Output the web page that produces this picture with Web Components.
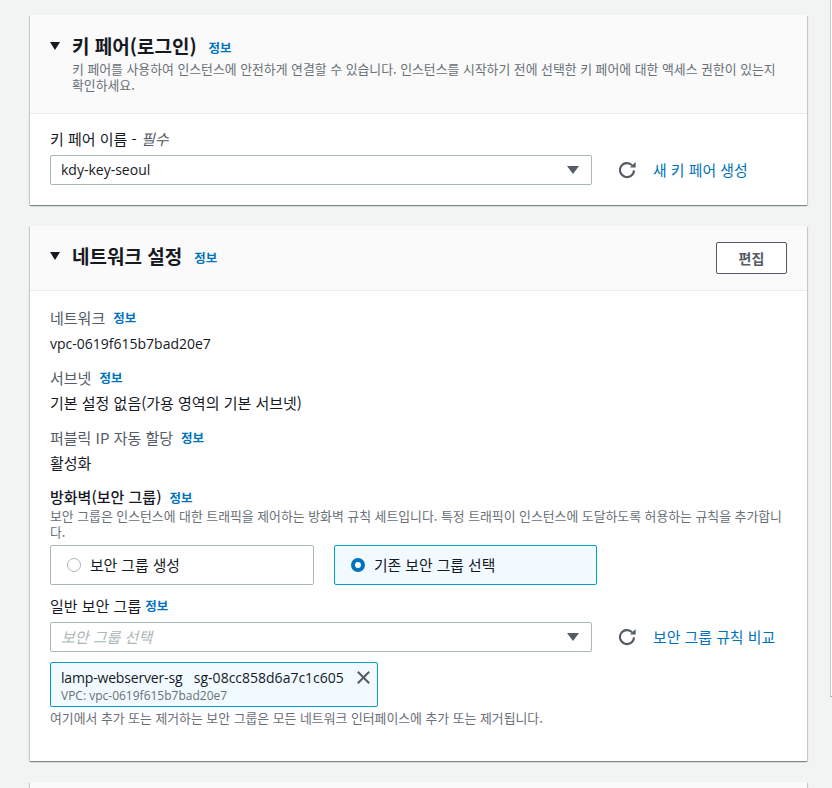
<!DOCTYPE html>
<html lang="ko"><head><meta charset="utf-8"><title>인스턴스</title>
<style>
html,body{margin:0;background:#f2f3f3;}
body{height:788px;overflow:hidden;display:flex;align-items:flex-start;font:14px/20px "Open Sans","Noto Sans CJK KR",sans-serif;color:#16191f;}
main{flex:none;width:777px;display:flex;flex-direction:column;gap:21px;padding:15px 23px 0 30px;}
</style></head><body>
<template id="t-info"><style>:host{display:inline-block;font:600 12.5px/16px "Noto Sans CJK KR",sans-serif;color:#0073bb;}</style><slot>정보</slot></template>

<template id="t-card"><style>
:host{display:block;background:#fff;box-shadow:0 1px 1px 0 rgba(0,28,36,.3),1px 1px 1px 0 rgba(0,28,36,.15),-1px 1px 1px 0 rgba(0,28,36,.15);}
header{display:flex;background:#fafafa;border-bottom:1px solid #eaeded;padding:var(--hp,18px 20px 20px);gap:12px;align-items:flex-start;}
.arrow{width:0;height:0;border-left:5.5px solid transparent;border-right:5.5px solid transparent;border-top:8px solid #16191f;margin-top:var(--am,9px);flex:none;}
.txt{flex:1;min-width:0;}
h2{margin:0;font:700 19px/26px "Noto Sans CJK KR",sans-serif;color:#16191f;display:flex;align-items:center;gap:12px;}
h2 x-info{margin-top:3px;}
.b{padding:var(--bp,16px 20px 20px);}
</style><header><span class="arrow"></span><div class="txt"><h2><slot name="title"></slot><x-info></x-info></h2><slot name="desc"></slot></div><slot name="action"></slot></header><div class="b"><slot></slot></div></template>

<template id="t-select"><style>
:host{display:flex;align-items:center;gap:27px;}
.s{width:542px;box-sizing:border-box;height:30px;display:flex;align-items:center;justify-content:space-between;background:#fff;border:1px solid #aab7b8;border-radius:2px;padding:0 12px 0 10px;font:14px/20px "Open Sans","Noto Sans CJK KR",sans-serif;color:#16191f;flex:none;}
.c{width:0;height:0;border-left:6px solid transparent;border-right:6px solid transparent;border-top:8px solid #545b64;}
svg{width:18px;height:18px;flex:none;display:block;}
.l{font:14.9px/20px "Noto Sans CJK KR",sans-serif;color:#0073bb;margin-left:-11px;white-space:nowrap;}
</style><div class="s"><span><slot></slot></span><span class="c"></span></div><svg viewBox="0 0 18 18" fill="none"><path d="M13.2 4.4A7 7 0 1 0 15 9.4" stroke="#545b64" stroke-width="2.1"/><path d="M16.6 1v5.6H11z" fill="#545b64"/></svg><span class="l"><slot name="link"></slot></span></template>

<template id="t-field"><style>
:host{display:block;}
.l{font:15px/20px "Noto Sans CJK KR",sans-serif;color:#545b64;display:flex;align-items:center;gap:8px;height:20px;padding-top:1px;}
.v{display:flow-root;font:14px/20px "Open Sans","Noto Sans CJK KR",sans-serif;color:#16191f;margin-top:6px;height:20px;}
::slotted(.ko){display:block;font:15px/20px "Noto Sans CJK KR",sans-serif;margin-top:-1px;}
</style><div class="l"><slot name="label"></slot><x-info></x-info></div><div class="v"><slot></slot></div></template>

<template id="t-radio"><style>
:host{display:flex;box-sizing:border-box;width:264px;height:40px;align-items:center;gap:9px;padding-left:16px;background:#fff;border:1px solid #aab7b8;border-radius:2px;font:14.8px/20px "Noto Sans CJK KR",sans-serif;color:#16191f;}
:host([checked]){width:263px;background:#f1faff;border-color:#00a1c9;}
i{box-sizing:border-box;width:14px;height:14px;border-radius:50%;border:1px solid #aab7b8;background:#fff;flex:none;}
:host([checked]) i{border:4px solid #0073bb;}
</style><i></i><slot></slot></template>

<template id="t-token"><style>
:host{display:block;box-sizing:border-box;width:328px;height:45px;background:#f1faff;border:1px solid #00a1c9;border-radius:2px;padding:5px 0 0 10px;position:relative;}
.a{font:14px/20px "Open Sans",sans-serif;color:#16191f;white-space:nowrap;display:flex;gap:11.5px;}
.b{font:12px/14px "Open Sans",sans-serif;color:#687078;margin-top:1px;}
svg{position:absolute;left:306px;top:8px;width:13px;height:13px;}
</style><div class="a"><slot name="a"></slot><slot name="a2"></slot></div><div class="b"><slot name="b"></slot></div><svg viewBox="0 0 13 13" fill="none" stroke="#545b64" stroke-width="2"><path d="M.8.8l11.4 11.4M12.2.8L.8 12.2"/></svg></template>

<template id="t-side"><style>
:host{display:block;flex:none;box-sizing:border-box;width:2px;height:697px;background:#fff;border-left:1px solid #c6cdcd;border-bottom:1px solid #9aa5a6;}
</style></template>

<script>
for(const [n,id] of [['x-info','t-info'],['x-card','t-card'],['x-select','t-select'],['x-field','t-field'],['x-radio','t-radio'],['x-token','t-token'],['x-side','t-side']]){
 customElements.define(n,class extends HTMLElement{constructor(){super();this.attachShadow({mode:'open'}).appendChild(document.getElementById(id).content.cloneNode(true));}});
}
customElements.define('x-button',class extends HTMLElement{constructor(){super();this.attachShadow({mode:'open'}).innerHTML='<style>:host{display:flex;align-items:center;justify-content:center;box-sizing:border-box;width:71px;height:32px;border:1px solid #545b64;border-radius:2px;background:#fff;font:700 14px/20px "Noto Sans CJK KR",sans-serif;color:#545b64;flex:none;}</style><slot></slot>';}});
customElements.define('x-key-card',class extends HTMLElement{constructor(){super();this.attachShadow({mode:'open'}).innerHTML=`<style>:host{display:block;height:190px;}
.lab{font:15px/20px "Noto Sans CJK KR",sans-serif;color:#16191f;margin-top:-1px;margin-bottom:6px}
.lab em{color:#545b64}
.desc{display:block;font:12.87px/16px "Noto Sans CJK KR",sans-serif;color:#687078;margin-top:2px;}</style>
<x-card><span slot="title">키 페어(로그인)</span><span class="desc" slot="desc">키 페어를 사용하여 인스턴스에 안전하게 연결할 수 있습니다. 인스턴스를 시작하기 전에 선택한 키 페어에 대한 액세스 권한이 있는지 확인하세요.</span>
<div class="lab">키 페어 이름 - <em>필수</em></div><x-select>kdy-key-seoul<span slot="link">새 키 페어 생성</span></x-select></x-card>`;}});
customElements.define('x-net-card',class extends HTMLElement{constructor(){super();this.attachShadow({mode:'open'}).innerHTML=`<style>:host{display:block;height:535px;--hp:17px 20px 15px;--bp:16px 21px 0 20px;--am:9px}
x-button{margin-top:-1px;margin-bottom:1px}
x-field{margin-bottom:13px}
.fw{font:500 15px/20px "Noto Sans CJK KR",sans-serif;color:#16191f;display:flex;align-items:center;gap:8px;height:20px}
.fw x-info{margin-top:1px}
.d{font:12.87px/16px "Noto Sans CJK KR",sans-serif;color:#687078;margin-top:1px}
.r{display:flex;gap:20px;margin:5px 0 11px}
.lab{font:15px/20px "Noto Sans CJK KR",sans-serif;color:#16191f;display:flex;gap:4px;align-items:center;margin-bottom:6px;}
x-select{margin-bottom:10px}
.h{margin-top:3px;font:12.87px/16px "Noto Sans CJK KR",sans-serif;color:#687078;padding-bottom:35px}
.ph{color:#aab7b8;font:italic 15px/20px "Noto Sans CJK KR",sans-serif;}
.lamp{letter-spacing:-.17px}
</style>
<x-card><span slot="title">네트워크 설정</span><x-button slot="action">편집</x-button>
<x-field><span slot="label">네트워크</span>vpc-0619f615b7bad20e7</x-field>
<x-field><span slot="label">서브넷</span><span class="ko">기본 설정 없음(가용 영역의 기본 서브넷)</span></x-field>
<x-field><span slot="label">퍼블릭 IP 자동 할당</span><span class="ko">활성화</span></x-field>
<div class="fw">방화벽(보안 그룹)<x-info></x-info></div>
<div class="d">보안 그룹은 인스턴스에 대한 트래픽을 제어하는 방화벽 규칙 세트입니다. 특정 트래픽이 인스턴스에 도달하도록 허용하는 규칙을 추가합니다.</div>
<div class="r"><x-radio>보안 그룹 생성</x-radio><x-radio checked>기존 보안 그룹 선택</x-radio></div>
<div class="lab">일반 보안 그룹<x-info></x-info></div>
<x-select><span class="ph">보안 그룹 선택</span><span slot="link">보안 그룹 규칙 비교</span></x-select>
<x-token><span class="lamp" slot="a">lamp-webserver-sg</span><span slot="a2">sg-08cc858d6a7c1c605</span><span slot="b">VPC: vpc-0619f615b7bad20e7</span></x-token>
<div class="h">여기에서 추가 또는 제거하는 보안 그룹은 모든 네트워크 인터페이스에 추가 또는 제거됩니다.</div>
</x-card>`;}});
customElements.define('x-empty-card',class extends HTMLElement{constructor(){super();this.attachShadow({mode:'open'}).innerHTML='<style>:host{display:block;height:40px;background:#fafafa;box-shadow:0 1px 1px 0 rgba(0,28,36,.3),1px 1px 1px 0 rgba(0,28,36,.15),-1px 1px 1px 0 rgba(0,28,36,.15);}</style>';}});
</script>
<main><x-key-card></x-key-card><x-net-card></x-net-card><x-empty-card></x-empty-card></main><x-side></x-side>
</body></html>
